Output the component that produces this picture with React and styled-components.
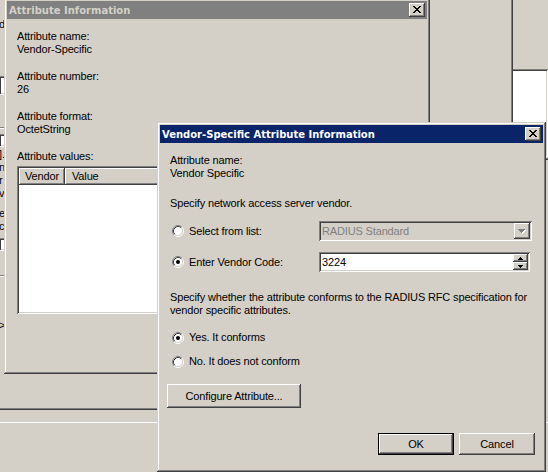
import styled, { createGlobalStyle, css } from "styled-components";

const FACE = "#d4d0c8";
const SHADOW = "#808080";
const DARK = "#404040";

const GlobalStyle = createGlobalStyle`
  html, body {
    margin: 0;
    padding: 0;
    background: ${FACE};
  }
  body {
    font-family: "Liberation Sans", Arial, sans-serif;
    font-size: 11px;
    letter-spacing: -0.15px;
    color: #000;
  }
  * {
    box-sizing: border-box;
  }
`;

// classic 3D edges
const raised = css`
  box-shadow: inset -1px -1px ${DARK}, inset 1px 1px #ffffff,
    inset -2px -2px ${SHADOW}, inset 2px 2px ${FACE};
`;

const sunken = css`
  box-shadow: inset 1px 1px ${SHADOW}, inset -1px -1px #ffffff,
    inset 2px 2px ${DARK}, inset -2px -2px ${FACE};
`;

const Desktop = styled.div`
  position: relative;
  width: 548px;
  height: 472px;
  overflow: hidden;
  background: ${FACE};
`;

const Window = styled.div`
  position: absolute;
  left: ${(p) => p.$x}px;
  top: ${(p) => p.$y}px;
  width: ${(p) => p.$w}px;
  height: ${(p) => p.$h}px;
  padding: 3px;
  display: flex;
  flex-direction: column;
  background: ${FACE};
  box-shadow: inset -1px -1px ${DARK}, inset 1px 1px ${FACE},
    inset -2px -2px ${SHADOW}, inset 2px 2px #ffffff;
`;

const TitleBar = styled.div`
  flex: none;
  height: 18px;
  display: flex;
  align-items: center;
  justify-content: space-between;
  padding: 0 2px;
  background: ${(p) => (p.$active ? "#0a246a" : SHADOW)};
  color: ${(p) => (p.$active ? "#ffffff" : FACE)};
  font: bold 10px "DejaVu Sans", Tahoma, sans-serif;
  letter-spacing: 0;
  white-space: nowrap;
`;

const CloseButton = styled.div`
  width: 16px;
  height: 14px;
  padding: 3px 0 0 4px;
  background: ${FACE};
  ${raised}

  svg {
    display: block;
  }
`;

const Body = styled.div`
  flex: 1;
  display: flex;
  flex-direction: column;
  padding: ${(p) => p.$pad};
`;

const Block = styled.div`
  margin-top: ${(p) => p.$mt || 0}px;
`;

const Line = styled.div`
  line-height: 13px;
  height: 13px;
  white-space: nowrap;
`;

const Para = styled.div`
  margin-top: ${(p) => p.$mt || 0}px;
  line-height: 13px;
  white-space: nowrap;
`;

const ListView = styled.div`
  margin-top: 3px;
  height: 148px;
  padding: 2px;
  background: #ffffff;
  ${sunken}
`;

const ListHeader = styled.div`
  display: flex;
  height: 17px;
`;

const HeaderCell = styled.div`
  flex: ${(p) => (p.$w ? `0 0 ${p.$w}px` : "1")};
  height: 17px;
  line-height: 16px;
  padding-left: ${(p) => p.$pl}px;
  background: ${FACE};
  ${raised}
`;

const ChoiceRow = styled.div`
  margin-top: ${(p) => p.$mt || 0}px;
  display: flex;
  align-items: center;
  height: ${(p) => p.$h || 13}px;
`;

const RadioLabel = styled.label`
  display: flex;
  align-items: center;
  gap: 5px;
  padding-left: 2px;
  width: ${(p) => (p.$w ? `${p.$w}px` : "auto")};
  line-height: 13px;
  white-space: nowrap;

  svg {
    flex: none;
    display: block;
  }
`;

const Combo = styled.div`
  width: 213px;
  height: 20px;
  padding: 2px;
  display: flex;
  align-items: center;
  background: ${FACE};
  color: ${SHADOW};
  ${sunken}

  span {
    flex: 1;
    padding-left: 1px;
  }
`;

const DropButton = styled.div`
  width: 16px;
  height: 16px;
  display: flex;
  align-items: center;
  justify-content: center;
  background: ${FACE};
  ${raised}
`;

const SpinField = styled.div`
  width: 211px;
  height: 20px;
  padding: 2px;
  display: flex;
  align-items: center;
  background: #ffffff;
  ${sunken}

  span {
    flex: 1;
    padding-left: 1px;
  }
`;

const SpinButtons = styled.div`
  display: flex;
  flex-direction: column;
  width: 15px;
  height: 16px;
`;

const SpinButton = styled.div`
  height: 8px;
  display: flex;
  align-items: center;
  justify-content: center;
  background: ${FACE};
  ${raised}
`;

const PushButton = styled.button`
  width: ${(p) => p.$w}px;
  height: ${(p) => p.$h}px;
  margin: ${(p) => p.$m || 0};
  padding: 0;
  border: none;
  background: ${FACE};
  font: 11px "Liberation Sans", Arial, sans-serif;
  letter-spacing: -0.15px;
  color: #000;
  ${(p) =>
    p.$default
      ? css`
          box-shadow: inset 0 0 0 1px #000000, inset -2px -2px ${DARK},
            inset 2px 2px #ffffff, inset -3px -3px ${SHADOW},
            inset 3px 3px ${FACE};
        `
      : raised}
`;

const ButtonRow = styled.div`
  margin-top: ${(p) => p.$mt || 0}px;
  display: flex;
  justify-content: flex-end;
  gap: 5px;
`;

// pieces of the windows lying underneath
const Fragments = styled.div`
  display: flex;
  flex-direction: column;
  margin-left: ${(p) => p.$ml}px;
  width: ${(p) => p.$w}px;
  overflow: hidden;
`;

const FragLine = styled.div`
  margin-top: ${(p) => p.$mt || 0}px;
  line-height: 13px;
  height: 13px;
  white-space: nowrap;
`;

const FragField = styled.div`
  margin-top: ${(p) => p.$mt || 0}px;
  height: ${(p) => p.$h}px;
  background: #ffffff;
  ${sunken}
`;

const Etched = styled.div`
  margin-top: ${(p) => p.$mt || 0}px;
  height: 2px;
  border-top: 1px solid ${SHADOW};
  border-bottom: 1px solid #ffffff;
`;

const CloseGlyph = () => (
  <svg width="8" height="7" viewBox="0 0 8 7" shapeRendering="crispEdges">
    <path
      d="M0 0h2v1H0zM6 0h2v1H6zM1 1h2v1H1zM5 1h2v1H5zM2 2h4v1H2zM3 3h2v1H3zM2 4h4v1H2zM1 5h2v1H1zM5 5h2v1H5zM0 6h2v1H0zM6 6h2v1H6z"
      fill="#000"
    />
  </svg>
);

const Radio = ({ checked }) => (
  <svg width="12" height="12" viewBox="0 0 12 12">
    <circle cx="6" cy="6" r="4.5" fill="#ffffff" />
    <path d="M2.11 9.89A5.5 5.5 0 0 1 9.89 2.11" fill="none" stroke={SHADOW} />
    <path d="M9.89 2.11A5.5 5.5 0 0 1 2.11 9.89" fill="none" stroke="#ffffff" />
    <path d="M2.82 9.18A4.5 4.5 0 0 1 9.18 2.82" fill="none" stroke={DARK} />
    <path d="M9.18 2.82A4.5 4.5 0 0 1 2.82 9.18" fill="none" stroke={FACE} />
    {checked && <circle cx="6" cy="6" r="2" fill="#000" />}
  </svg>
);

const DownArrow = ({ disabled }) => (
  <svg width="8" height="5" viewBox="0 0 8 5" shapeRendering="crispEdges">
    {disabled && <path d="M1 1h7L4.5 5z" fill="#ffffff" />}
    <path d="M0 0h7L3.5 4z" fill={disabled ? SHADOW : "#000"} />
  </svg>
);

const SpinArrow = ({ up }) => (
  <svg width="5" height="3" viewBox="0 0 5 3" shapeRendering="crispEdges">
    <path
      d={up ? "M2 0h1v1h1v1h1v1H0V2h1V1h1z" : "M0 0h5v1H4v1H3v1H2V2H1V1H0z"}
      fill="#000"
    />
  </svg>
);

const App = () => {
  return (
    <>
      <GlobalStyle />
      <Desktop>
        {/* window behind, peeking on the right */}
        <Window $x={490} $y={-40} $w={100} $h={200}>
          <Fragments $ml={15} $w={40}>
            <FragField $mt={106} $h={100} />
          </Fragments>
        </Window>

        {/* large window behind, left strip */}
        <Window $x={-200} $y={-40} $w={713} $h={450}>
          <Fragments $ml={196} $w={8}>
            <FragLine $mt={55}>d</FragLine>
            <FragField $mt={45} $h={19} />
            <Etched $mt={32} />
            <FragField $mt={5} $h={13} />
            <FragLine $mt={1}>].</FragLine>
            <FragLine>n</FragLine>
            <FragLine>r</FragLine>
            <FragLine>v</FragLine>
            <FragLine $mt={7}>e</FragLine>
            <FragLine>c</FragLine>
            <FragField $mt={5} $h={13} />
            <Etched $mt={24} />
            <FragLine $mt={42}>&gt;</FragLine>
          </Fragments>
        </Window>

        <Window $x={-10} $y={421} $w={600} $h={100} />

        {/* Attribute Information (inactive) */}
        <Window $x={4} $y={-2} $w={426} $h={376}>
          <TitleBar>
            <span>Attribute Information</span>
            <CloseButton>
              <CloseGlyph />
            </CloseButton>
          </TitleBar>
          <Body $pad="11px 10px 0 10px">
            <Block>
              <Line>Attribute name:</Line>
              <Line>Vendor-Specific</Line>
            </Block>
            <Block $mt={14}>
              <Line>Attribute number:</Line>
              <Line>26</Line>
            </Block>
            <Block $mt={14}>
              <Line>Attribute format:</Line>
              <Line>OctetString</Line>
            </Block>
            <Block $mt={14}>
              <Line>Attribute values:</Line>
            </Block>
            <ListView>
              <ListHeader>
                <HeaderCell $w={46} $pl={6}>
                  Vendor
                </HeaderCell>
                <HeaderCell $pl={7}>Value</HeaderCell>
              </ListHeader>
            </ListView>
          </Body>
        </Window>

        {/* Vendor-Specific Attribute Information (active) */}
        <Window $x={157} $y={122} $w={389} $h={350}>
          <TitleBar $active>
            <span>Vendor-Specific Attribute Information</span>
            <CloseButton>
              <CloseGlyph />
            </CloseButton>
          </TitleBar>
          <Body $pad="11px 8px 0 10px">
            <Block>
              <Line>Attribute name:</Line>
              <Line>Vendor Specific</Line>
            </Block>
            <Para $mt={17}>Specify network access server vendor.</Para>
            <ChoiceRow $mt={11} $h={20}>
              <RadioLabel $w={149}>
                <Radio />
                Select from list:
              </RadioLabel>
              <Combo>
                <span>RADIUS Standard</span>
                <DropButton>
                  <DownArrow disabled />
                </DropButton>
              </Combo>
            </ChoiceRow>
            <ChoiceRow $mt={11} $h={20}>
              <RadioLabel $w={149}>
                <Radio checked />
                Enter Vendor Code:
              </RadioLabel>
              <SpinField>
                <span>3224</span>
                <SpinButtons>
                  <SpinButton>
                    <SpinArrow up />
                  </SpinButton>
                  <SpinButton>
                    <SpinArrow />
                  </SpinButton>
                </SpinButtons>
              </SpinField>
            </ChoiceRow>
            <Para $mt={19}>
              Specify whether the attribute conforms to the RADIUS RFC
              specification for
              <br />
              vendor specific attributes.
            </Para>
            <ChoiceRow $mt={14}>
              <RadioLabel>
                <Radio checked />
                Yes. It conforms
              </RadioLabel>
            </ChoiceRow>
            <ChoiceRow $mt={11}>
              <RadioLabel>
                <Radio />
                No. It does not conform
              </RadioLabel>
            </ChoiceRow>
            <Block $mt={16}>
              <PushButton $w={134} $h={24} $m="0 0 0 -3px">
                Configure Attribute...
              </PushButton>
            </Block>
            <ButtonRow $mt={25}>
              <PushButton $w={76} $h={22} $default>
                OK
              </PushButton>
              <PushButton $w={76} $h={22}>
                Cancel
              </PushButton>
            </ButtonRow>
          </Body>
        </Window>
      </Desktop>
    </>
  );
};

export default App;
